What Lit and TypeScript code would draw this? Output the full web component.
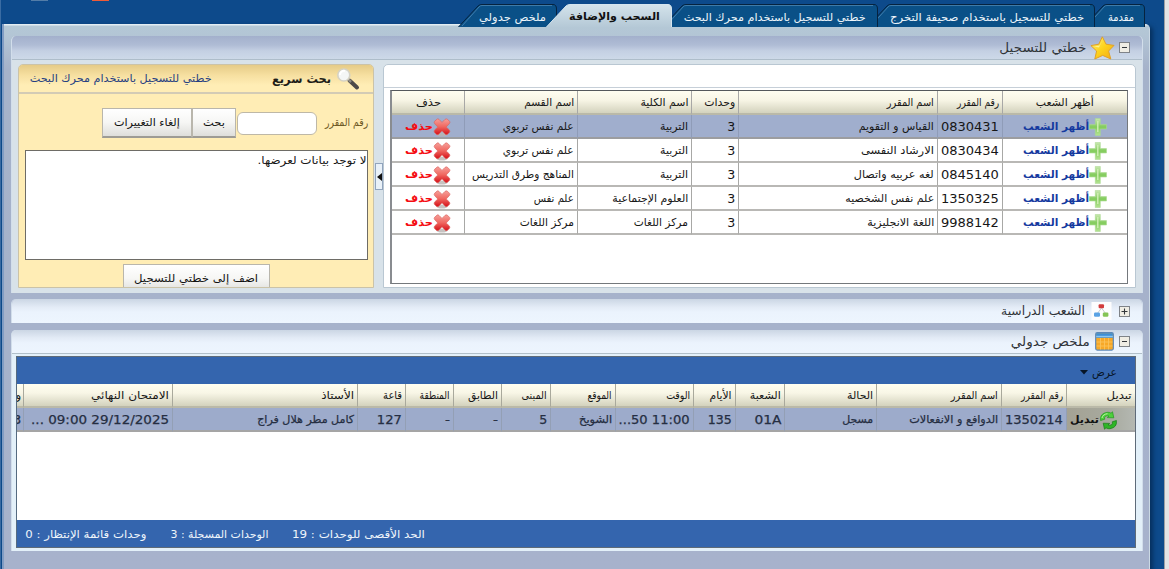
import { LitElement, html, svg, css } from "lit";
import { customElement, property } from "lit/decorators.js";

/** A single line of text fitted to a column measure. */
@customElement("fit-text")
class FitText extends LitElement {
  @property() text = "";
  @property({ type: Number }) w = 0;
  static styles = css`
    :host { display: block; flex: none; direction: rtl; white-space: nowrap; }
    .line { display: inline-block; transform-origin: 100% 50%; }
  `;
  render() {
    return html`<span class="line">${this.text}</span>`;
  }
  firstUpdated() {
    const line = this.renderRoot.querySelector(".line") as HTMLElement;
    const fit = () => {
      line.style.transform = "none";
      const natural = line.getBoundingClientRect().width;
      if (this.w && natural) {
        this.style.width = this.w + "px";
        line.style.transform = `scaleX(${this.w / natural})`;
      }
    };
    fit();
    document.fonts.ready.then(fit);
  }
}

const t = (text: string, w: number, cls = "") =>
  html`<fit-text class=${cls} .text=${text} .w=${w}></fit-text>`;

const star = html`<svg class="i-star" width="25" height="24" viewBox="0 0 25 24">
  <defs><linearGradient id="s" x1="0" y1="0" x2="1" y2="1"><stop offset="0" stop-color="#fff27a"/><stop offset=".5" stop-color="#fdd31c"/><stop offset="1" stop-color="#f3a712"/></linearGradient></defs>
  <path d="M12.3 .8 16 8.200 24 9.400 18.600 15 20.800 23 12.700 19.400 4.800 23 6.600 15 .9 9.600 8.800 8.200Z" fill="url(#s)" stroke="#dfa02a" stroke-width="1" stroke-linejoin="round"/>
  <path d="M12.4 4 9.6 9.4 4 10.4 9 11.5Z" fill="#fff9b8" opacity=".7"/></svg>`;

const lens = html`<svg width="24" height="24" viewBox="0 0 24 24">
  <path d="M13.5 13.5 21 20.5" stroke="#4d4a49" stroke-width="4" stroke-linecap="round"/>
  <path d="M12 12 15 15" stroke="#8d8a84" stroke-width="2.5"/>
  <circle cx="7.8" cy="8" r="6" fill="#f4f6f6" stroke="#d5d2c4" stroke-width="1.6"/>
  <path d="M4 8a4 4 0 0 1 5-4" stroke="#fff" stroke-width="2" fill="none"/></svg>`;

const plus = html`<svg width="18" height="18" viewBox="0 0 18 18">
  <defs><linearGradient id="g" x1="0" y1="0" x2="0" y2="1"><stop offset="0" stop-color="#c9e8b0"/><stop offset=".5" stop-color="#82cc5c"/><stop offset="1" stop-color="#b5e393"/></linearGradient></defs>
  <path d="M6.3 .4h5v6.200h6.200v4.400h-6.200v6.600h-5v-6.600H.3v-4.400h6Z" fill="url(#g)" stroke="#a9d890" stroke-width=".6"/>
  <path d="M8.800 3v11" stroke="#d2efb6" stroke-width="1.400"/></svg>`;

const cross = html`<svg width="18" height="19" viewBox="0 0 18 19">
  <defs><linearGradient id="r" x1="0" y1="0" x2="0" y2="1"><stop offset="0" stop-color="#f6a09a"/><stop offset=".5" stop-color="#f06760"/><stop offset="1" stop-color="#d50f18"/></linearGradient></defs>
  <ellipse cx="9" cy="16.600" rx="5.500" ry="2" fill="#b9b4b2" opacity=".8"/>
  <path d="M4.200 1Q5 .6 6 1.400L9 4.400 12 1.400Q13.200 .4 14.500 1.300L16.600 3.400Q17.300 4.600 16.200 5.800L13.200 9 16.400 12Q17.300 13.200 16.400 14.500L14.200 16.400Q13 17 12 16L9 12.800 6 16Q5 17 3.600 16.400L1.500 14.500Q.7 13.200 1.600 12L4.800 9 1.800 5.800Q.7 4.600 1.600 3.300Z" fill="url(#r)" stroke="#dd6661" stroke-width=".7" stroke-linejoin="round"/></svg>`;

const org = html`<svg class="i-org" width="21" height="19" viewBox="0 0 21 19">
  <rect x=".5" width="20" height="18" fill="#fdfdfe"/>
  <path d="M10.500 6 6 12M10.500 6 15 12" stroke="#c6c9cc" stroke-width="1"/>
  <rect x="7.600" y="2.200" width="5.400" height="4" rx="1" fill="#d23c3c"/>
  <rect x="3" y="10.500" width="6" height="4.200" rx="1.200" fill="#5aa2e4"/>
  <rect x="11.800" y="10.500" width="5.600" height="4.200" rx="1.200" fill="#85c456"/></svg>`;

const cal = html`<svg width="19" height="19" viewBox="0 0 19 19">
  <rect x=".7" y=".7" width="17.6" height="17.4" rx="1.5" fill="#f7a827" stroke="#5b87b8" stroke-width="1.2"/>
  <rect x="1.2" y="1.2" width="16.6" height="4.6" fill="#3d8fd6"/><rect x="1.2" y="3.8" width="16.6" height="1.4" fill="#8cc6f2"/>
  <path d="M5.5 6v11.5M9.5 6v11.5M13.5 6v11.5M1.5 10h16M1.5 14h16" stroke="#fbc560" stroke-width=".8"/></svg>`;

const swap = html`<svg width="19" height="19" viewBox="0 0 19 19">
  <path d="M1.600 9.500Q.6 2.500 8 1.300Q10.500 1 12 2.200L13.500 .8 14.800 6.800 8.300 6.600 10 5Q5 4 5.600 8.300Z" fill="#4fd13c" stroke="#1f9a1c" stroke-width=".7"/>
  <path d="M17.400 9.500Q18.400 16.500 11 17.700Q8.500 18 7 16.800L5.500 18.200 4.200 12.200 10.700 12.400 9 14Q14 15 13.400 10.700Z" fill="#2fb526" stroke="#157d15" stroke-width=".7"/>
  <path d="M3 7C3.500 4.500 5.500 3 8.500 2.700" stroke="#b7f3a0" fill="none"/></svg>`;

const toggle = (open: boolean) => html`<svg width="11" height="11" viewBox="0 0 11 11">
  <rect x=".5" y=".5" width="10" height="10" fill="#efede4" stroke="#7f8388"/>
  <path d=${open ? "M3 5.500h5" : "M2.500 5.500h6M5.500 2.500v6"} stroke="#33373b" stroke-width="1.100"/></svg>`;

interface Tab { label: string; w: number; tw: number; overlap: number; pad: number; active?: boolean }
const tabs: Tab[] = [
  { label: "مقدمة", w: 62, tw: 26, overlap: 0, pad: 11 },
  { label: "خطتي للتسجيل باستخدام صحيفة التخرج", w: 228, tw: 194, overlap: 12, pad: 11 },
  { label: "خطتي للتسجيل باستخدام محرك البحث", w: 216, tw: 182, overlap: 11, pad: 12 },
  { label: "السحب والإضافة", w: 126, tw: 91, overlap: 10, pad: 12, active: true },
  { label: "ملخص جدولي", w: 99, tw: 67, overlap: 11, pad: 11 },
];

const tabShape = (b: Tab) => {
  const d = `M0 23.500 L20 2 Q21.500 .5 24 .5 H${b.w - 4} Q${b.w - 0.5} .5 ${b.w - 0.5} 5 V23.500`;
  return svg`<path d=${d + "Z"} fill=${b.active ? "url(#ta)" : "#0a5087"} />
    <path d=${d} fill="none" stroke=${b.active ? "#d5e5ef" : "#06233f"} />
    ${b.active ? "" : svg`<path d=${`M4 22 L21 3 Q22 1.500 24 1.500 H${b.w - 5}`} fill="none" stroke="#4c86b3" stroke-width=".8"/>`}`;
};

const courses = [
  ["0830431", "القياس و التقويم", 75, "التربية", 28, "علم نفس تربوي", 71],
  ["0830434", "الارشاد النفسى", 73, "التربية", 28, "علم نفس تربوي", 71],
  ["0845140", "لغه عربيه واتصال", 80, "التربية", 28, "المناهج وطرق التدريس", 102],
  ["1350325", "علم نفس الشخصيه", 89, "العلوم الإجتماعية", 76, "علم نفس", 40],
  ["9988142", "اللغة الانجليزية", 67, "مركز اللغات", 54, "مركز اللغات", 54],
] as const;

const heads: [string, number][] = [
  ["أظهر الشعب", 58], ["رقم المقرر", 42], ["اسم المقرر", 47], ["وحدات", 31],
  ["اسم الكلية", 48], ["اسم القسم", 50], ["حذف", 25],
];

const schedule: [string, number, string, number][] = [
  ["رقم المقرر", 42, "1350214", 58],
  ["اسم المقرر", 47, "الدوافع و الانفعالات", 89],
  ["الحالة", 26, "مسجل", 31],
  ["الشعبة", 31, "01A", 27],
  ["الأيام", 22, "135", 24],
  ["الوقت", 24, "11:00 50...", 71],
  ["الموقع", 24, "الشويخ", 33],
  ["المبنى", 25, "5", 8],
  ["الطابق", 30, "-", 5],
  ["المنطقة", 30, "-", 5],
  ["قاعة", 19, "127", 25],
  ["الأستاذ", 33, "كامل مطر هلال فراج", 97],
  ["الامتحان النهائي", 78, "29/12/2025 09:00 ...", 138],
  ["و", 6, "3", 8],
];

@customElement("app-root")
class AppRoot extends LitElement {
  static styles = css`
    * { box-sizing: border-box; }
    :host { display: block; width: 1169px; height: 569px; overflow: hidden; direction: rtl;
      font: 11px/16px "DejaVu Sans", sans-serif; color: #161616; }
    svg { display: block; flex: none; }
    .page { height: 569px; background: #0d4a8b; border-right: 4px solid #e3e4e6; border-left: 1px solid #3a6ca3;
      padding: 4px 15px 0 1px; box-shadow: inset -1px 0 #9c9fa5; position: relative; }
    .remnant { position: absolute; top: 0; left: 91px; width: 17px; height: 1px; background: #ee5b37; }
    .remnant.pale { left: 30px; background: #537da8; }
    .tabs { display: flex; height: 23px; padding-right: 5px; position: relative; z-index: 2; }
    .tab { position: relative; flex: none; height: 23px; display: flex; padding-top: 6px; color: #eef6fb; }
    .tab svg { position: absolute; inset: 0; }
    .tab fit-text { position: relative; }
    .tab.active { z-index: 3; padding-top: 5px; color: #111; font-weight: bold; }
    .frame { margin-top: -3px; height: 548px; padding: 12px 6px 0 7px; border-radius: 0 5px 0 0;
      background: linear-gradient(#e2edf3 0 1px, #b4c8d6 2px, #b3c5d5 12px, #a5b2ca 45px, #a7b2cc);
      border-left: 2px solid #819cc3; border-right: 1px solid #cbd9e4; box-shadow: 3px 2px 4px #06315f; }
    .panel { border-radius: 5px 5px 0 0; background: #d8e2e9; border-left: 1px solid #d2deeb; border-right: 1px solid #d2deeb; overflow: hidden; }
    .panel + .panel { margin-top: 6px; }
    .panel + .panel.last { margin-top: 7px; }
    .bar { height: 24px; display: flex; align-items: center; padding-right: 12px; font-size: 12.500px; color: #303439;
      background: linear-gradient(#cbd6e4, #e3ebf6 8px, #ebf3fd 13px, #edf5fe); }
    .bar.top { background: linear-gradient(#a3b0cc, #afbcd5 9px, #c4d0e3 15px, #cdd9e8); border-bottom: 1px solid #aebdca; }
    .bar.line { border-bottom: 1px solid #b1bfc9; }
    .bar fit-text { margin-right: 5px; }
    .i-star { margin-right: 4px; }
    .bar .i-star + fit-text { margin-right: 4px; }
    .i-org { margin-right: 7px; }
    .bar .i-org + fit-text { margin-right: 6px; }
    .bar .gap { width: 5px; }
    .body { display: flex; padding: 4px 6px 5px 6px; height: 233px; }
    .plan { width: 753px; flex: none; background: #fff; border: 1px solid #b9c7d2; border-radius: 5px 5px 0 0; padding: 0 7px 3px 6px; }
    .strip { height: 23px; margin: 0 -7px 2px -6px; border-bottom: 1px solid #c6cfd8; }
    .grid { height: 194px; border: 1px solid #74787c; border-top-color: #55595c; border-left-width: 2px; border-left-color: #898c90; }
    .row { display: grid; grid-template-columns: 125px 65px 199px 47px 114px 113px 1fr; height: 24px; }
    .cell { display: flex; align-items: center; padding: 2px 3px 0 0; border-left: 1px solid #a8a8a6; border-bottom: 2px solid #b9b8b5; overflow: hidden; min-width: 0; }
    .cell.mid { justify-content: center; padding: 2px 0 0; }
    .cell:last-child { border-left: 0; }
    .row.head .cell, .srow.head .cell { background: linear-gradient(#fffef0, #f8f6e6 9px, #d3d2bd); border-bottom-color: #bab9a8; }
    .row.sel .cell { background: #a0aecd; border-left-color: #8f9cb8; border-bottom-color: #9c9da0; }
    .num { font-size: 13px; }
    .blue { color: #153a9f; font-weight: bold; }
    .red { color: #f50d12; font-weight: bold; }
    .split { width: 9px; flex: none; display: flex; align-items: flex-start; padding: 99px 0 0; }
    .knob { width: 8px; height: 27px; background: #e9f1f8; border: 1px solid #91a4bd; display: flex; align-items: center; justify-content: center; }
    .search { flex: 1; min-width: 0; border: 1px solid #cbc3a8; border-radius: 5px 5px 0 0; background: #ffedb5; overflow: hidden; }
    .shead { height: 29px; display: flex; align-items: center; padding: 0 13px 0 11px; border-bottom: 2px solid #d3cbb5;
      background: linear-gradient(#e5cb87, #f6dfa0 10px, #ffedb5 20px); color: #263f82; }
    .shead .t { color: #1f1d18; font-weight: bold; font-size: 12px; margin-right: 5px; }
    .grow { flex: 1; }
    .form { display: flex; align-items: center; height: 30px; margin-top: 14px; padding-right: 5px; color: #6c5723; }
    .input { width: 80px; height: 23px; flex: none; margin: 0 8px 0 1px; border: 1px solid #beb8a7; border-radius: 6px; background: #fff; }
    .btn { height: 30px; display: flex; align-items: center; justify-content: center; color: #111;
      background: linear-gradient(#fff, #f6f6f4 50%, #dededb); border: 1px solid #b9b6ac; border-bottom: 2px solid #9d9b95; flex: none; }
    .btn.s { width: 44px; } .btn.c { width: 90px; }
    .btn.add { width: 147px; margin: 4px auto 0; }
    .list { height: 110px; margin: 12px 5px 0 6px; border: 1px solid #6e6c66; background: #fff; padding-top: 2px; }
    .sbody { background: #e3f0f9; padding: 2px 6px 3px 4px; height: 197px; }
    .sched { height: 192px; background: #3465ae; border: 1px solid #5e6b79; border-left: 1px solid #556a80; display: flex; flex-direction: column; }
    .menu { height: 27px; display: flex; align-items: center; padding: 4px 18px 0 0; color: #071527; }
    .menu svg { margin-right: 4px; }
    .rows { height: 136px; background: #fff; overflow: hidden; }
    .srow { display: grid; grid-template-columns: 69px 65px 125px 92px 49px 42px 78px 65px 49px 48px 48px 48px 185px 149px 1fr; height: 24px; }
    .srow .cell { border-left-color: #a9a99c; }
    .srow.data .cell { background: #9dabcb; color: #252e42; border-left-color: #939fb5; border-bottom-color: #a5a5a5; -webkit-text-stroke: .25px #252e42; }
    .srow .cell:last-child { padding-right: 2px; }
    .srow.data .cell.sw { background: linear-gradient(90deg, #a4a294, #a7a99e 60%, #b4b8b2); color: #111; font-weight: bold; padding-right: 17px; -webkit-text-stroke: 0; }
    .foot { flex: 1; display: flex; align-items: center; justify-content: flex-end; color: #eff5fb; padding: 2px 0 0 8px; }
    .foot fit-text + fit-text { margin-right: 24px; }
  `;

  render() {
    return html`<div class="page">
      <div class="remnant"></div><div class="remnant pale"></div>
      <div class="tabs">${tabs.map((b) => html`
        <div class="tab ${b.active ? "active" : ""}" style="width:${b.w}px;margin-right:${-b.overlap}px;padding-right:${b.pad}px">
          <svg width=${b.w} height="23"><defs><linearGradient id="ta" x1="0" y1="0" x2="0" y2="1"><stop offset="0" stop-color="#d4e3eb"/><stop offset="1" stop-color="#b4c8d6"/></linearGradient></defs>${tabShape(b)}</svg>
          ${t(b.label, b.tw)}
        </div>`)}</div>
      <div class="frame">
        <section class="panel">
          <div class="bar top">${toggle(true)}${star}${t("خطتي للتسجيل", 87)}</div>
          <div class="body">
            <div class="plan">
              <div class="strip"></div>
              <div class="grid">
                <div class="row head">${heads.map(([h, w], i) => html`<div class="cell ${i === 0 || i === 6 ? "mid" : ""}">${t(h, w)}</div>`)}</div>
                ${courses.map((c, i) => html`<div class="row ${i === 0 ? "sel" : ""}">
                  <div class="cell mid">${plus}${t("أظهر الشعب", 66, "blue")}</div>
                  <div class="cell">${t(c[0], 58, "num")}</div>
                  <div class="cell">${t(c[1], c[2])}</div>
                  <div class="cell">${t("3", 8, "num")}</div>
                  <div class="cell">${t(c[3], c[4])}</div>
                  <div class="cell">${t(c[5], c[6])}</div>
                  <div class="cell mid">${cross}${t("حذف", 28, "red")}</div>
                </div>`)}
              </div>
            </div>
            <div class="split"><div class="knob"><svg width="5" height="8"><path d="M0 4 5 0v8Z" fill="#111"/></svg></div></div>
            <div class="search">
              <div class="shead">${lens}${t("بحث سريع", 59, "t")}<span class="grow"></span>${t("خطتي للتسجيل باستخدام محرك البحث", 182)}</div>
              <div class="form">${t("رقم المقرر", 43)}<div class="input"></div><div class="btn s">${t("بحث", 22)}</div><div class="btn c">${t("إلغاء التغييرات", 66)}</div></div>
              <div class="list">${t("لا توجد بيانات لعرضها.", 109)}</div>
              <div class="btn add">${t("اضف إلى خطتي للتسجيل", 124)}</div>
            </div>
          </div>
        </section>
        <section class="panel"><div class="bar">${toggle(false)}${org}${t("الشعب الدراسية", 84)}</div></section>
        <section class="panel last">
          <div class="bar line">${toggle(true)}<span class="gap"></span>${cal}${t("ملخص جدولي", 79)}</div>
          <div class="sbody"><div class="sched">
            <div class="menu">${t("عرض", 25)}<svg width="8" height="5"><path d="M0 0h8L4 4.500Z" fill="#071527"/></svg></div>
            <div class="rows">
              <div class="srow head"><div class="cell">${t("تبديل", 25)}</div>${schedule.map((s) => html`<div class="cell">${t(s[0], s[1])}</div>`)}</div>
              <div class="srow data"><div class="cell sw">${swap}${t("تبديل", 29)}</div>${schedule.map((s) => html`<div class="cell">${t(s[2], s[3], /\d/.test(s[2]) ? "num" : "")}</div>`)}</div>
            </div>
            <div class="foot">${t("الحد الأقصى للوحدات : 19", 133)}${t("الوحدات المسجلة : 3", 98)}${t("وحدات قائمة الإنتظار : 0", 121)}</div>
          </div></div>
        </section>
      </div>
    </div>`;
  }
}
